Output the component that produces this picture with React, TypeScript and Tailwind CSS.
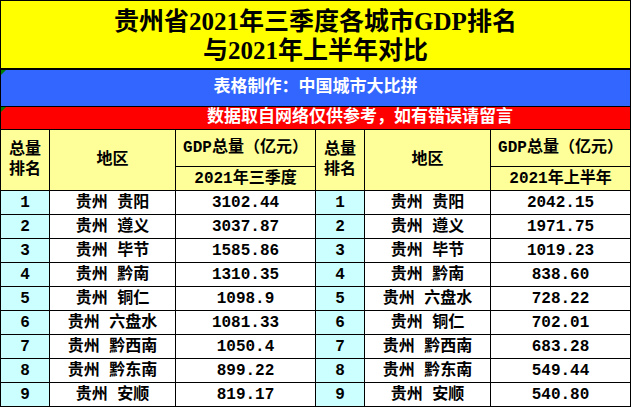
const left = [
  ["1", "贵州 贵阳", "3102.44"],
  ["2", "贵州 遵义", "3037.87"],
  ["3", "贵州 毕节", "1585.86"],
  ["4", "贵州 黔南", "1310.35"],
  ["5", "贵州 铜仁", "1098.9"],
  ["6", "贵州 六盘水", "1081.33"],
  ["7", "贵州 黔西南", "1050.4"],
  ["8", "贵州 黔东南", "899.22"],
  ["9", "贵州 安顺", "819.17"],
];

const right = [
  ["1", "贵州 贵阳", "2042.15"],
  ["2", "贵州 遵义", "1971.75"],
  ["3", "贵州 毕节", "1019.23"],
  ["4", "贵州 黔南", "838.60"],
  ["5", "贵州 六盘水", "728.22"],
  ["6", "贵州 铜仁", "702.01"],
  ["7", "贵州 黔西南", "683.28"],
  ["8", "贵州 黔东南", "549.44"],
  ["9", "贵州 安顺", "540.80"],
];

const cell = "flex items-center justify-center whitespace-pre";

function Marker() {
  return (
    <span className="absolute left-0 top-0 h-0 w-0 border-r-[5px] border-t-[5px] border-r-transparent border-t-[#008000]" />
  );
}

function HeaderGroup({ period }: { period: string }) {
  return (
    <>
      <div className={`${cell} row-span-2 flex-col bg-[#ffff99] leading-[20px]`}>
        <span>总量</span>
        <span>排名</span>
      </div>
      <div className={`${cell} row-span-2 bg-[#ffff99]`}>地区</div>
      <div className={`${cell} bg-[#ffff99]`}>GDP总量（亿元）</div>
    </>
  );
}

export default function App() {
  const rows = left.map((l, i) => [l, right[i]]);
  return (
    <div
      className="grid w-[631px] grid-cols-[48px_125px_139px_48px_125px_139px] grid-rows-[68px_36px_22px_36px_23px_repeat(9,23px)] gap-px bg-black p-px text-[16px] font-bold text-black"
      style={{ fontFamily: '"Liberation Mono", "Noto Sans CJK SC", monospace' }}
    >
      <div
        className="col-span-6 flex flex-col items-center justify-center border-b border-black bg-[#ffff00] pt-[3px] text-[25px] leading-[29px]"
        style={{ fontFamily: '"Liberation Serif", "Noto Sans CJK SC", serif' }}
      >
        <span>贵州省2021年三季度各城市GDP排名</span>
        <span>与2021年上半年对比</span>
      </div>
      <div className="relative col-span-6 flex items-center justify-center bg-[#3366ff] text-[17px] text-white">
        <Marker />
        表格制作：中国城市大比拼
      </div>
      <div className="relative col-span-6 flex items-center bg-[#ff0000] pl-[206px] text-[17px] text-white">
        <Marker />
        数据取自网络仅供参考，如有错误请留言
      </div>

      <HeaderGroup period="2021年三季度" />
      <HeaderGroup period="2021年上半年" />
      <div className={`${cell} col-start-3 bg-[#ffff99]`}>2021年三季度</div>
      <div className={`${cell} col-start-6 bg-[#ffff99]`}>2021年上半年</div>

      {rows.map(([l, r]) => (
        <div key={l[0]} className="contents">
          <div className={`${cell} bg-[#ccffff]`}>{l[0]}</div>
          <div className={`${cell} bg-white`}>{l[1]}</div>
          <div className={`${cell} bg-white`}>{l[2]}</div>
          <div className={`${cell} bg-[#ccffff]`}>{r[0]}</div>
          <div className={`${cell} bg-white`}>{r[1]}</div>
          <div className={`${cell} bg-white`}>{r[2]}</div>
        </div>
      ))}
    </div>
  );
}
